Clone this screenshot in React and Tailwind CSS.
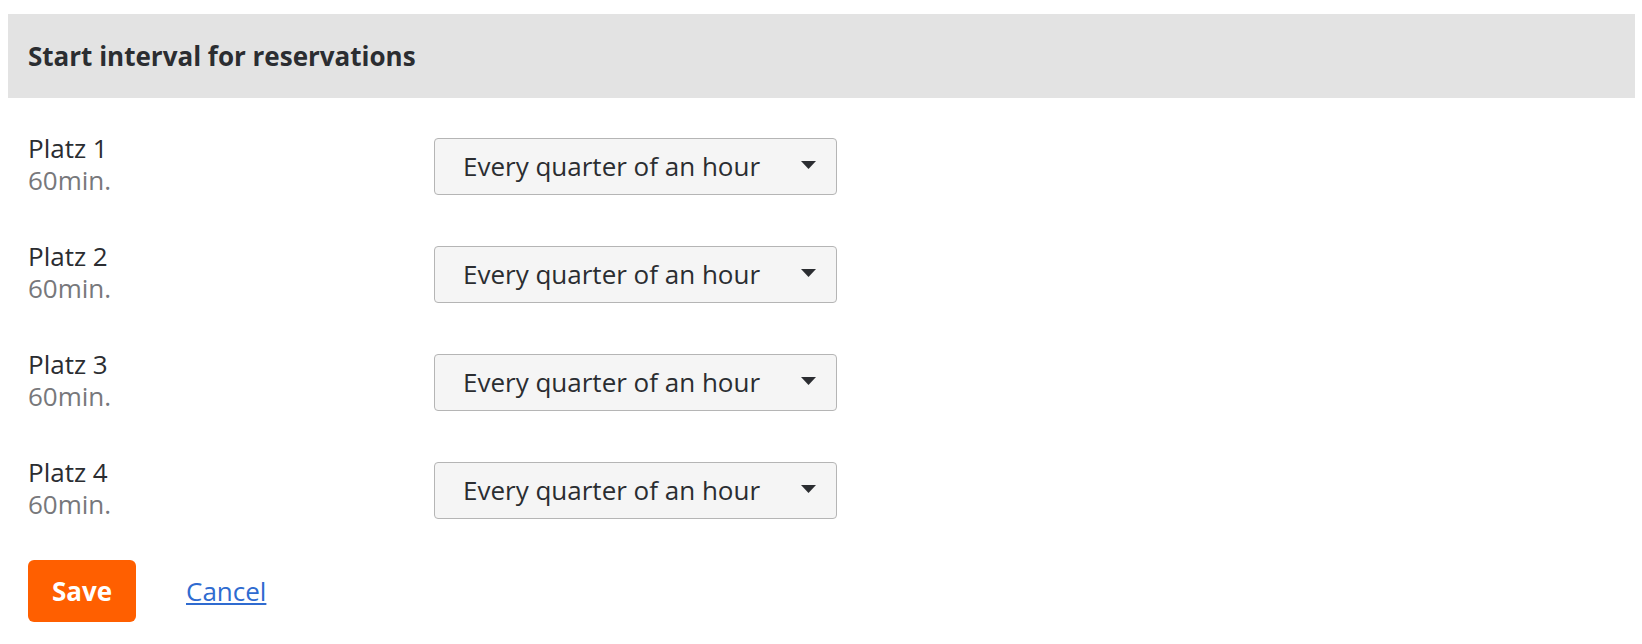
import React from 'react';

const places = [
  { name: 'Platz 1', duration: '60min.' },
  { name: 'Platz 2', duration: '60min.' },
  { name: 'Platz 3', duration: '60min.' },
  { name: 'Platz 4', duration: '60min.' },
];

const IntervalSelect = () => (
  <div className="mt-[4px] w-[403px] h-[57px] flex items-center justify-between pl-[28px] pr-[20px] bg-[#f5f5f5] border border-[#b5b5b5] rounded-[4px]">
    <span className="text-[26px] text-[#2b2d31]">Every quarter of an hour</span>
    <svg width="15" height="8" viewBox="0 0 15 8" className="mb-[3px]">
      <path d="M0 0h15L7.5 8z" fill="#2b2d31" />
    </svg>
  </div>
);

const App = () => {
  return (
    <div className="min-h-screen bg-white pt-[14px] pl-[8px] pr-[7px]" style={{ fontFamily: '"Open Sans", sans-serif' }}>
      <div className="h-[84px] bg-[#e3e3e3] flex items-center pl-[20px]">
        <h1 className="text-[26px] font-bold text-[#2b2d31]">Start interval for reservations</h1>
      </div>

      <div className="pl-[20px] pt-[34px] flex flex-col gap-[44px]">
        {places.map((p) => (
          <div key={p.name} className="flex items-center">
            <div className="w-[406px] text-[26px] leading-[32px]">
              <div className="text-[#2b2d31]">{p.name}</div>
              <div className="text-[#77787b]">{p.duration}</div>
            </div>
            <IntervalSelect />
          </div>
        ))}

        <div className="flex items-center gap-[50px] -mt-[4px]">
          <button className="w-[108px] h-[62px] rounded-[6px] bg-[#ff5f00] text-white text-[26px] font-bold">
            Save
          </button>
          <a href="#" className="text-[26px] text-[#2f6bd0] underline">Cancel</a>
        </div>
      </div>
    </div>
  );
};

export default App;
